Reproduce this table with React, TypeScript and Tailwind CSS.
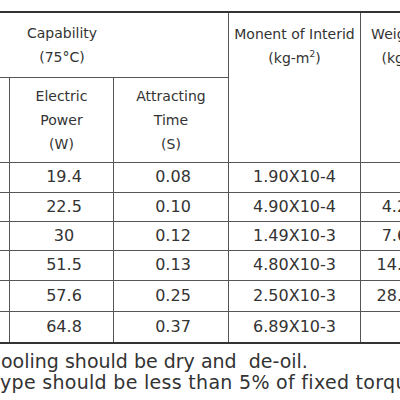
import React from "react";

const rows = [
  { h: "h-[30px]", power: "19.4", time: "0.08", inertia: "1.90X10-4", weight: "" },
  { h: "h-[29px]", power: "22.5", time: "0.10", inertia: "4.90X10-4", weight: "4.20" },
  { h: "h-[29px]", power: "30", time: "0.12", inertia: "1.49X10-3", weight: "7.60" },
  { h: "h-[30px]", power: "51.5", time: "0.13", inertia: "4.80X10-3", weight: "14.25" },
  { h: "h-[31px]", power: "57.6", time: "0.25", inertia: "2.50X10-3", weight: "28.60" },
  { h: "h-[32px]", power: "64.8", time: "0.37", inertia: "6.89X10-3", weight: "" },
];

const cell = "border border-[#555] text-center align-middle p-0";

export default function App() {
  return (
    <div className="w-[400px] h-[400px] overflow-hidden bg-white text-[#333] font-['DejaVu_Sans',sans-serif]">
      <div className="pt-[11px] ml-[-105px]">
        <table className="table-fixed border-collapse w-[535px] border-t-2 border-b-2 border-[#333]">
          <colgroup>
            <col className="w-[114px]" />
            <col className="w-[104px]" />
            <col className="w-[115px]" />
            <col className="w-[132px]" />
            <col className="w-[70px]" />
          </colgroup>
          <thead className="text-[14px] leading-[24px]">
            <tr className="h-[65px]">
              <th colSpan={3} className={`${cell} font-normal border-t-2 border-t-[#333]`}>
                Capability
                <br />
                (75°C)
              </th>
              <th rowSpan={2} className={`${cell} font-normal align-top pt-[9px] border-t-2 border-t-[#333] whitespace-nowrap`}>
                Monent of Interid
                <br />
                (kg-m<span className="relative top-[-6px] text-[9px]">2</span>)
              </th>
              <th rowSpan={2} className={`${cell} font-normal align-top pt-[9px] border-t-2 border-t-[#333] whitespace-nowrap`}>
                Weight
                <br />
                (kg)
              </th>
            </tr>
            <tr className="h-[85px]">
              <th className={`${cell} font-normal`}></th>
              <th className={`${cell} font-normal`}>
                Electric
                <br />
                Power
                <br />
                (W)
              </th>
              <th className={`${cell} font-normal`}>
                Attracting
                <br />
                Time
                <br />
                (S)
              </th>
            </tr>
          </thead>
          <tbody className="text-[16px]">
            {rows.map((r, i) => (
              <tr key={i} className={r.h}>
                <td className={cell}></td>
                <td className={`${cell} pl-[5px]`}>{r.power}</td>
                <td className={`${cell} pl-[4px]`}>{r.time}</td>
                <td className={`${cell} whitespace-nowrap`}>{r.inertia}</td>
                <td className={`${cell} whitespace-nowrap pl-[8px]`}>{r.weight}</td>
              </tr>
            ))}
          </tbody>
        </table>
      </div>
      <div className="mt-[7px] text-[19px] leading-[21px] whitespace-pre text-[#333]">
        <p className="pl-[1px]">ooling should be dry and  de-oil.</p>
        <p className="tracking-[0.3px]">ype should be less than 5% of fixed torque</p>
      </div>
    </div>
  );
}
